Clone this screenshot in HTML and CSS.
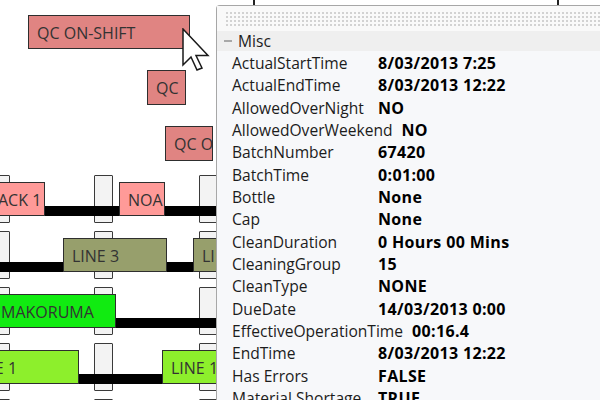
FILE: index.html
```html
<!DOCTYPE html>
<html>
<head>
<meta charset="utf-8">
<link rel="stylesheet" href="styles.css">
</head>
<body>
<div class="canvas">
  <div class="tick tick-a"></div>
  <div class="tick tick-b"></div>

  <div class="task qc qc-main">QC ON-SHIFT</div>
  <div class="task qc qc-small">QC</div>
  <div class="task qc qc-third">QC ON-SHIFT</div>

  <div class="lanes">
    <div class="lane">
      <div class="peg" style="left:-9px"></div>
      <div class="peg" style="left:94px"></div>
      <div class="peg" style="left:199px"></div>
      <div class="bar" style="left:0;width:260px"></div>
      <div class="task pink" style="left:-11px;width:56px">ACK 1</div>
      <div class="task pink" style="left:119px;width:46px">NOA</div>
    </div>
    <div class="lane">
      <div class="peg" style="left:-9px"></div>
      <div class="peg" style="left:94px"></div>
      <div class="peg" style="left:199px"></div>
      <div class="bar" style="left:0;width:260px"></div>
      <div class="task olive" style="left:63px;width:104px">LINE 3</div>
      <div class="task olive" style="left:193px;width:80px">LINE 3</div>
    </div>
    <div class="lane">
      <div class="peg" style="left:-9px"></div>
      <div class="peg" style="left:94px"></div>
      <div class="peg" style="left:199px"></div>
      <div class="bar" style="left:0;width:260px"></div>
      <div class="task green pad0" style="left:-1px;width:117px">MAKORUMA</div>
    </div>
    <div class="lane">
      <div class="peg" style="left:-9px"></div>
      <div class="peg" style="left:94px"></div>
      <div class="peg" style="left:199px"></div>
      <div class="bar" style="left:0;width:260px"></div>
      <div class="task lime" style="left:-39px;width:118px">LINE 1</div>
      <div class="task lime" style="left:162px;width:90px">LINE 1</div>
    </div>
    <div class="lane">
      <div class="peg" style="left:-9px"></div>
      <div class="peg" style="left:94px"></div>
      <div class="peg" style="left:199px"></div>
    </div>
  </div>
</div>

<div class="panel">
  <div class="grip"><div class="dots"></div></div>
  <div class="cat"><span class="minus"></span><span class="cat-name">Misc</span></div>
  <div class="rows">
    <div class="row"><span class="lbl">ActualStartTime</span><span class="val">8/03/2013 7:25</span></div>
    <div class="row"><span class="lbl">ActualEndTime</span><span class="val">8/03/2013 12:22</span></div>
    <div class="row"><span class="lbl">AllowedOverNight</span><span class="val">NO</span></div>
    <div class="row"><span class="lbl">AllowedOverWeekend</span><span class="val">NO</span></div>
    <div class="row"><span class="lbl">BatchNumber</span><span class="val">67420</span></div>
    <div class="row"><span class="lbl">BatchTime</span><span class="val">0:01:00</span></div>
    <div class="row"><span class="lbl">Bottle</span><span class="val">None</span></div>
    <div class="row"><span class="lbl">Cap</span><span class="val">None</span></div>
    <div class="row"><span class="lbl">CleanDuration</span><span class="val">0 Hours 00 Mins</span></div>
    <div class="row"><span class="lbl">CleaningGroup</span><span class="val">15</span></div>
    <div class="row"><span class="lbl">CleanType</span><span class="val">NONE</span></div>
    <div class="row"><span class="lbl">DueDate</span><span class="val">14/03/2013 0:00</span></div>
    <div class="row"><span class="lbl">EffectiveOperationTime</span><span class="val">00:16.4</span></div>
    <div class="row"><span class="lbl">EndTime</span><span class="val">8/03/2013 12:22</span></div>
    <div class="row"><span class="lbl">Has Errors</span><span class="val">FALSE</span></div>
    <div class="row"><span class="lbl">Material Shortage</span><span class="val">TRUE</span></div>
  </div>
</div>

<svg class="cursor" width="30" height="46" viewBox="0 0 30 46">
  <path d="M1 1 L1 37 L9 29 L15 42 L20 40 L14 27.5 L26 27.5 Z" fill="#ffffff" stroke="#1a1a1a" stroke-width="1.5" stroke-linejoin="miter"/>
</svg>
</body>
</html>
```
FILE: styles.css
```css
html, body {
  margin: 0;
  padding: 0;
  background: #ffffff;
}
body {
  width: 600px;
  height: 400px;
  position: relative;
  overflow: hidden;
}
.canvas {
  position: relative;
  width: 600px;
  height: 400px;
  overflow: hidden;
  font-family: "Open Sans", "Noto Sans", sans-serif;
}
.tick {
  position: absolute;
  top: 0;
  width: 2px;
  height: 6px;
  background: #222;
}
.tick-a { left: 253px; }
.tick-b { left: 557px; }

.task {
  position: absolute;
  box-sizing: border-box;
  height: 34px;
  border: 1px solid #2e2e2e;
  padding: 3px 0 0 8px;
  line-height: 29px;
  font-size: 16px;
  color: #333333;
  white-space: nowrap;
  overflow: hidden;
}
.task.pad0 { padding-left: 1px; }
.qc { background: #e08482; }
.qc-main { left: 28px; top: 15px; width: 162px; }
.qc-small { left: 147px; top: 70px; width: 39px; height: 35px; }
.qc-third { left: 165px; top: 126px; width: 48px; height: 35px; }
.pink { background: #ff9a98; top: 7px; }
.olive { background: #979f6c; top: 7px; }
.green { background: #11eb11; top: 7px; }
.lime { background: #8def2c; top: 7px; }

.lanes {
  position: absolute;
  left: 0;
  top: 175px;
  width: 216px;
  display: flex;
  flex-direction: column;
}
.lane {
  position: relative;
  height: 56px;
  flex: none;
}
.peg {
  position: absolute;
  top: 0;
  width: 19px;
  height: 48px;
  box-sizing: border-box;
  border: 1px solid #3a3a3a;
  border-radius: 1px;
  background: #f3f3f3;
}
.bar {
  position: absolute;
  top: 31px;
  height: 10px;
  background: #000000;
}

.panel {
  position: absolute;
  left: 216px;
  top: 5px;
  right: -20px;
  bottom: -20px;
  border-left: 1px solid #a7a7a7;
  border-top: 1px solid #a7a7a7;
  border-top-left-radius: 4px;
  background: #f7f8fa;
  font-family: "Open Sans", "Noto Sans", sans-serif;
  font-size: 15.6px;
  color: #1c1c1c;
  display: flex;
  flex-direction: column;
}
.grip {
  height: 25px;
  background: #f9f9f9;
  padding: 6px 0 0 9px;
  box-sizing: border-box;
}
.dots {
  height: 14px;
  background-image:
    linear-gradient(90deg, transparent 2px, #f9f9f9 2px),
    linear-gradient(#d2d2d2 2px, transparent 2px);
  background-size: 4px 4px;
}
.cat {
  height: 20px;
  background: #efefef;
  display: flex;
  align-items: center;
  margin-bottom: 1px;
}
.minus {
  width: 8px;
  height: 2px;
  background: #a8a8a8;
  margin-left: 7px;
  margin-right: 6px;
}
.cat-name {
  line-height: 20px;
}
.rows {
  display: flex;
  flex-direction: column;
}
.row {
  height: 22.33px;
  line-height: 22.33px;
  display: flex;
  padding-left: 15px;
  white-space: nowrap;
}
.lbl {
  min-width: 137px;
  margin-right: 9px;
}
.val {
  font-weight: 700;
  font-size: 16px;
  letter-spacing: 0.35px;
  color: #000;
}

.cursor {
  position: absolute;
  left: 182px;
  top: 28px;
}
```
